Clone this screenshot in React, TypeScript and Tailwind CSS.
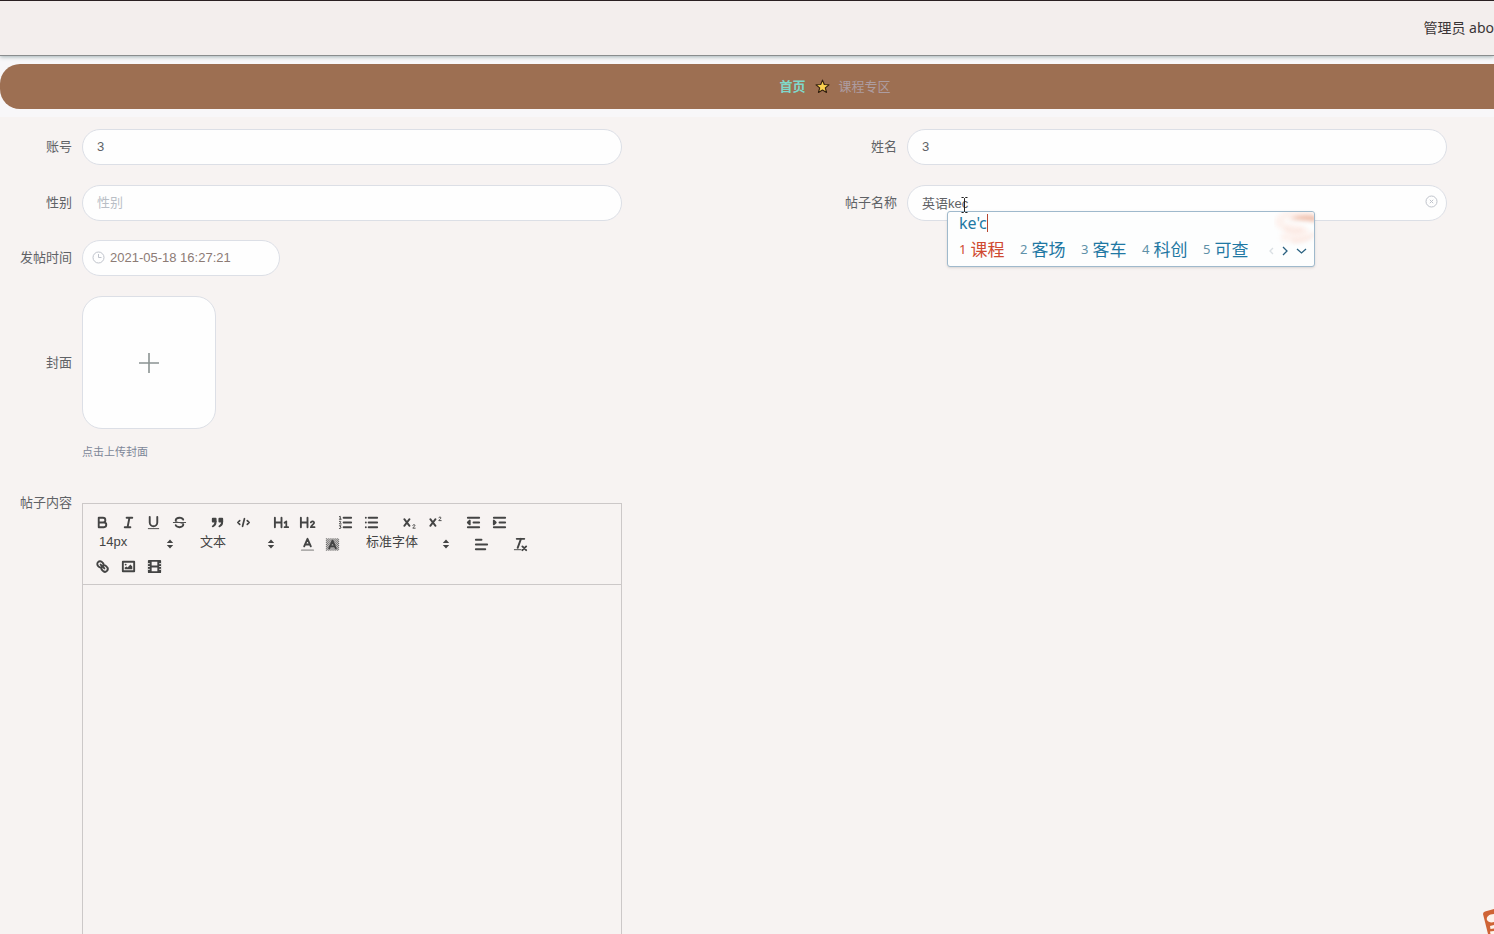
import React, { useState } from 'react';

const Icon: React.FC<{ children: React.ReactNode }> = ({ children }) => (
  <svg
    viewBox="0 0 18 18"
    className="h-[17px] w-[17px]"
    fill="none"
    stroke="currentColor"
    strokeWidth="2"
    strokeLinecap="round"
    strokeLinejoin="round"
    aria-hidden="true"
  >
    {children}
  </svg>
);

const icons: Record<string, React.ReactNode> = {
  bold: <path d="M5 4h4.5a2.5 2.5 0 0 1 0 5H5ZM5 9h5.5a2.5 2.5 0 0 1 0 5H5Z" />,
  italic: <path d="M7 4h6M5 14h6M8 14l2-10" />,
  underline: (
    <>
      <path d="M5 3v6a4 4 0 0 0 8 0V3" />
      <path d="M3.5 15.5h11" strokeWidth="1" />
    </>
  ),
  strike: (
    <>
      <path d="M2.5 9h13" strokeWidth="1" />
      <path
        fill="currentColor"
        stroke="none"
        d="M9 8C6.5 7.8 6 7.5 6 6.5 6 5.8 7.3 5 9 5c1.6 0 2.8.7 3 1.3a1 1 0 0 0 1.9-.6C13.4 4.1 11.4 3 9 3 6.2 3 4 4.5 4 6.5a3.2 3.2 0 0 0 .5 1.8ZM9 10c2.5.2 3 .5 3 1.5 0 .7-1.3 1.5-3 1.5-1.6 0-2.8-.7-3-1.3a1 1 0 1 0-1.9.6C4.6 13.9 6.6 15 9 15c2.8 0 5-1.5 5-3.5a3.2 3.2 0 0 0-.5-1.8Z"
      />
    </>
  ),
  quote: (
    <>
      <path fill="currentColor" d="M4 5h3v3H4ZM11 5h3v3h-3Z" />
      <path fill="currentColor" d="M7 8c0 4-3 5-3 5M14 8c0 4-3 5-3 5" />
    </>
  ),
  code: <path d="M5 7 3 9l2 2M13 7l2 2-2 2M10 5 8 13" strokeWidth="1.8" />,
  h1: (
    <>
      <path d="M2 4v10M9 4v10M2 9h7" />
      <path d="m12.2 9.3 1.9-1.5V14M12.2 14h3.9" strokeWidth="1.8" />
    </>
  ),
  h2: (
    <>
      <path d="M2 4v10M9 4v10M2 9h7" />
      <path d="M12.5 9c.5-1.7 3.7-1.5 3.5.4-.1 1.5-3.3 2.3-3.5 4.6h4" strokeWidth="1.8" />
    </>
  ),
  ordered: (
    <>
      <path d="M7 4h8M7 9h8M7 14h8" />
      <path
        d="M2.5 2.8 3.5 2.5v3M2.5 5.5h2M2.5 7.8c1.8-.8 2.2.4 0 2.7h2M2.5 12.5h1.8l-1 1.3c1.7.2 1.2 1.8-.8 1.6"
        strokeWidth="1"
      />
    </>
  ),
  bullet: <path d="M6 4h9M6 9h9M6 14h9M3 4h0M3 9h0M3 14h0" />,
  sub: (
    <>
      <path d="m3.5 5.5 5.5 7M9 5.5l-5.5 7" />
      <path d="M12.5 12c.4-1.3 2.5-1 2.2.3-.2 1-2 1.7-2.2 2.7H15" strokeWidth="1" />
    </>
  ),
  sup: (
    <>
      <path d="m3.5 5.5 5.5 7M9 5.5l-5.5 7" />
      <path d="M12.5 4c.4-1.3 2.5-1 2.2.3-.2 1-2 1.7-2.2 2.7H15" strokeWidth="1" />
    </>
  ),
  outdent: (
    <>
      <path d="M3 4h12M3 14h12M9 9h6" />
      <path fill="currentColor" d="M5 7v4L3 9Z" />
    </>
  ),
  indent: (
    <>
      <path d="M3 4h12M3 14h12M9 9h6" />
      <path fill="currentColor" d="M3 7v4l2-2Z" />
    </>
  ),
  color: (
    <>
      <path d="M3 15h12" opacity=".4" />
      <path d="M5.5 11 9 3l3.5 8M6.5 9h5" />
    </>
  ),
  background: (
    <>
      <path d="M2 3h14M2 5h14M2 7h14M2 9h14M2 11h14M2 13h14M2 15h14" strokeDasharray="1 1" strokeWidth="1" strokeLinecap="butt" />
      <path d="M3 4h13M3 6h13M3 8h13M3 10h13M3 12h13M3 14h13" strokeDasharray="1 1" strokeWidth="1" strokeLinecap="butt" />
      <path d="M5.5 13 9 5l3.5 8M6.5 11h5" />
    </>
  ),
  align: <path d="M3 9h12M3 14h10M3 4h6" />,
  clean: (
    <>
      <path d="M5 3h8M6 12.5 9.5 3" />
      <path d="m11 11 4 4M15 11l-4 4" />
      <path d="M2.5 14.5h7" strokeWidth="1" />
    </>
  ),
  link: (
    <>
      <path d="m7 7 4 4" />
      <path d="M8.9 4.6a3.3 3.3 0 0 1 .3 4.6c-1.2 1.2-3.2 1.1-4.6-.3s-1.5-3.4-.3-4.6 3.2-1.1 4.6.3ZM13.4 9.1a3.3 3.3 0 0 1 .3 4.6c-1.2 1.2-3.2 1.1-4.6-.3s-1.5-3.4-.3-4.6 3.2-1.1 4.6.3Z" />
    </>
  ),
  image: (
    <>
      <path d="M3 4h12v10H3Z" />
      <circle cx="6" cy="7" r="1" fill="currentColor" stroke="none" />
      <path fill="currentColor" stroke="none" d="M5 10v2h8V9l-2-2-3 3-1-1Z" />
    </>
  ),
  video: (
    <>
      <path d="M3 3h12v12H3ZM5 3v12M13 3v12M5 9h8" />
      <path d="M2 6h2M2 9h2M2 12h2M14 6h2M14 9h2M14 12h2" stroke="#f7f3f2" strokeWidth="1" strokeLinecap="butt" />
    </>
  ),
};

const ToolButton: React.FC<{ name: string }> = ({ name }) => (
  <button type="button" aria-label={name} className="flex h-[22px] items-center justify-center">
    <Icon>{icons[name]}</Icon>
  </button>
);

const Picker: React.FC<{ label: string; value: string; className: string }> = ({ label, value, className }) => (
  <div className={`flex h-[22px] items-center ${className}`}>
    <select
      aria-label={label}
      className="h-[22px] min-w-0 flex-1 appearance-none bg-transparent pb-1 text-[13px] leading-[18px] outline-none"
    >
      <option>{value}</option>
    </select>
    <svg viewBox="0 0 8 10" className="h-[10px] w-2" fill="currentColor" aria-hidden="true">
      <path d="M.8 4 4 .4 7.2 4ZM.8 6h6.4L4 9.6Z" />
    </svg>
  </div>
);

const Field: React.FC<{ id: string; label: string; children: React.ReactNode }> = ({ id, label, children }) => (
  <div className="flex items-center gap-[10px]">
    <label htmlFor={id} className="w-[72px] shrink-0 text-right">
      {label}
    </label>
    {children}
  </div>
);

const inputClass =
  'h-9 w-[540px] rounded-full border border-[#dcdfe6] bg-[#fefefe] px-[14px] pb-px text-[13px] text-[#606266] outline-none placeholder:text-[#b9bec6]';

const toolGroups = [
  ['quote', 'code'],
  ['h1', 'h2'],
  ['ordered', 'bullet'],
  ['sub', 'sup'],
  ['outdent', 'indent'],
];

const candidates = ['课程', '客场', '客车', '科创', '可查'];

const ImePopup: React.FC = () => (
  <div className="absolute top-[26px] left-10 h-14 w-[368px] overflow-hidden rounded-[3px] border border-[#9fb9cc] bg-[#fdfefe] pl-[11px] font-['Noto_Sans','Noto_Sans_CJK_SC',sans-serif] text-[#1f78a3] shadow-sm">
    <svg viewBox="0 0 40 34" className="absolute top-0 right-0 h-[34px] w-10" fill="none" aria-hidden="true">
      <g style={{ filter: 'blur(2px)' }}>
        <path d="M40 2C26-1 6 2 5 10c0 7 26 5 26 11 0 4-12 5-24 4" stroke="#fdf2ee" strokeWidth="8" />
        <path d="M15 7c8-4 18-4 27-3v6c-9-2-18-2-27-3Z" fill="#eebca8" />
        <path d="M10 17c7 3 16 3 18 0M18 29c10 1 18-2 22-8" stroke="#fae4dd" strokeWidth="3" />
      </g>
    </svg>
    <div className="flex h-[22px] items-center text-[16px] leading-[22px]">
      <span>ke'c</span>
      <span className="h-[18px] w-px bg-[#b8452f]" />
    </div>
    <div className="flex h-[31px] items-center">
      {candidates.map((word, i) => (
        <span
          key={word}
          className={`flex w-[61px] shrink-0 items-center gap-1 ${i === 0 ? 'text-[#cf4a30]' : ''}`}
        >
          <span className={`text-[13px] ${i === 0 ? '' : 'text-[#5f91a8]'}`}>{i + 1}</span>
          <span className="text-[17px] leading-6">{word}</span>
        </span>
      ))}
      <svg viewBox="0 0 42 12" className="mt-[3px] ml-[2px] h-3 w-[42px] shrink-0" fill="none" strokeWidth="1.3" aria-hidden="true">
        <path d="M7 3 4 6l3 3" stroke="#d9dfe3" />
        <path d="m17 2 4 4-4 4" stroke="#2a6180" />
        <path d="m31 4 4.5 4L40 4" stroke="#2a6180" />
      </svg>
    </div>
  </div>
);

const App: React.FC = () => {
  const [account, setAccount] = useState('3');
  const [name, setName] = useState('3');
  const [gender, setGender] = useState('');
  const [title, setTitle] = useState('英语kec');
  const [time, setTime] = useState('2021-05-18 16:27:21');

  return (
    <div className="relative h-screen overflow-hidden bg-[#f7f3f2] font-['Liberation_Sans','Noto_Sans_CJK_SC',sans-serif] text-[13px] text-[#606266]">
      <header className="relative flex h-14 items-center justify-end border-t border-b border-t-[#2a2022] border-b-[#8a8d8e] bg-[#f3eeed] pb-[2px] font-['Noto_Sans','Noto_Sans_CJK_SC',sans-serif] text-[14px] whitespace-nowrap text-[#3a3536] shadow-[0_1px_4px_#a3b3b5]">
        管理员 abo
      </header>

      <main className="min-w-[1670px]">
        <div className="bg-[#f8f7f9] py-2">
          <nav className="flex h-[45px] items-center justify-center gap-[9px] rounded-[20px] bg-[#9d6f52]">
            <a href="#home" className="font-bold text-[#7fd8cb]">
              首页
            </a>
            <svg viewBox="0 0 16 16" className="h-[15px] w-[15px]" aria-hidden="true">
              <path
                d="m8 1.200 1.900 4.700 5 .3-3.900 3.200 1.300 5L8 11.700l-4.300 2.700 1.300-5L1.100 6.200l5-.3Z"
                fill="#fbd04f"
                stroke="#33200f"
                strokeWidth="1.2"
                strokeLinejoin="round"
              />
            </svg>
            <a href="#course" className="text-[#ad9da1]">
              课程专区
            </a>
          </nav>
        </div>

        <form className="flex flex-col gap-[19px] pt-3 pr-5">
          <div className="grid grid-cols-2 gap-y-5">
            <Field id="account" label="账号">
              <input id="account" className={inputClass} value={account} onChange={(e) => setAccount(e.target.value)} />
            </Field>
            <Field id="name" label="姓名">
              <input id="name" className={inputClass} value={name} onChange={(e) => setName(e.target.value)} />
            </Field>
            <Field id="gender" label="性别">
              <input
                id="gender"
                className={inputClass}
                placeholder="性别"
                value={gender}
                onChange={(e) => setGender(e.target.value)}
              />
            </Field>
            <Field id="title" label="帖子名称">
              <div className="relative">
                <input id="title" className={inputClass} value={title} onChange={(e) => setTitle(e.target.value)} />
                <button type="button" aria-label="清空" className="absolute top-[10px] right-[9px] text-[#bfc3cb]">
                  <svg viewBox="0 0 13 13" className="h-[13px] w-[13px]" fill="none" stroke="currentColor" aria-hidden="true">
                    <circle cx="6.5" cy="6.5" r="5.5" />
                    <path d="m4.8 4.8 3.4 3.4M8.2 4.8 4.8 8.2" />
                  </svg>
                </button>
                <ImePopup />
                <svg viewBox="0 0 9 16" className="absolute top-3 left-[53px] h-4 w-[9px]" fill="none" stroke="#222" aria-hidden="true">
                  <path d="M1.500.5h2l1 1 1-1h2M4.500 1.500v13M1.500 15.500h2l1-1 1 1h2" />
                </svg>
              </div>
            </Field>
          </div>

          <Field id="time" label="发帖时间">
            <div className="relative">
              <svg viewBox="0 0 13 13" className="absolute top-[11px] left-[10px] h-[13px] w-[13px]" fill="none" stroke="#bfc3cb" aria-hidden="true">
                <circle cx="6.5" cy="6.5" r="5.5" />
                <path d="M6.5 3v3.5h3" />
              </svg>
              <input
                id="time"
                className="h-9 w-[198px] rounded-full border border-[#dcdfe6] bg-[#fefefe] pr-3 pb-px pl-[27px] text-[13px] text-[#8c7b75] outline-none"
                value={time}
                onChange={(e) => setTime(e.target.value)}
              />
            </div>
          </Field>

          <div className="pt-px">
            <Field id="cover" label="封面">
              <button
                id="cover"
                type="button"
                aria-label="点击上传封面"
                className="flex h-[133px] w-[134px] items-center justify-center rounded-[20px] border border-[#dcdfe6] bg-[#fefefe]"
              >
                <svg viewBox="0 0 22 22" className="h-[22px] w-[22px]" fill="none" stroke="#8b9392" strokeWidth="1.6" aria-hidden="true">
                  <path d="M11 1v20M1 11h20" />
                </svg>
              </button>
            </Field>
            <p className="mt-[14px] ml-[82px] text-[11px] leading-[18px] text-[#7d8698]">点击上传封面</p>
          </div>

          <div className="mt-[23px] flex gap-[10px]">
            <label htmlFor="content" className="-mt-[10px] w-[72px] shrink-0 text-right leading-5">
              帖子内容
            </label>
            <div className="w-[540px] border border-[#ccc8c8] text-[#444]">
              <div className="border-b border-[#ccc8c8] p-[7px]">
                <div className="flex gap-[13px]">
                  <div className="grid w-[102px] grid-cols-4">
                    <ToolButton name="bold" />
                    <ToolButton name="italic" />
                    <ToolButton name="underline" />
                    <ToolButton name="strike" />
                  </div>
                  {toolGroups.map((group) => (
                    <div key={group[0]} className="grid w-[51px] grid-cols-2">
                      {group.map((tool) => (
                        <ToolButton key={tool} name={tool} />
                      ))}
                    </div>
                  ))}
                </div>
                <div className="flex">
                  <Picker label="字号" value="14px" className="ml-[9px] w-[75px]" />
                  <Picker label="标题" value="文本" className="ml-[26px] w-[75px]" />
                  <div className="ml-5 grid w-[50px] grid-cols-2">
                    <ToolButton name="color" />
                    <ToolButton name="background" />
                  </div>
                  <Picker label="字体" value="标准字体" className="ml-[21px] w-[84px]" />
                  <div className="ml-[18px] grid w-[26px]">
                    <ToolButton name="align" />
                  </div>
                  <div className="ml-[13px] grid w-[26px]">
                    <ToolButton name="clean" />
                  </div>
                </div>
                <div className="grid w-[77px] grid-cols-3">
                  <ToolButton name="link" />
                  <ToolButton name="image" />
                  <ToolButton name="video" />
                </div>
              </div>
              <textarea id="content" className="block h-[400px] w-full resize-none bg-transparent p-3 outline-none" />
            </div>
          </div>
        </form>
      </main>

      <svg viewBox="0 0 12 26" className="absolute right-0 bottom-0 h-[26px] w-3" aria-hidden="true">
        <path d="M1 6q0-2 2-2.500L12 1v25H6Z" fill="#cf6335" />
        <path d="M12 6C7 6 4 9 5 12c1 2 4 3 7 2ZM12 17l-4 1 .5 3 3.500-.5ZM12 23l-4 .5.500 2.500H12Z" fill="#fdf3ec" />
      </svg>
    </div>
  );
};

export default App;
